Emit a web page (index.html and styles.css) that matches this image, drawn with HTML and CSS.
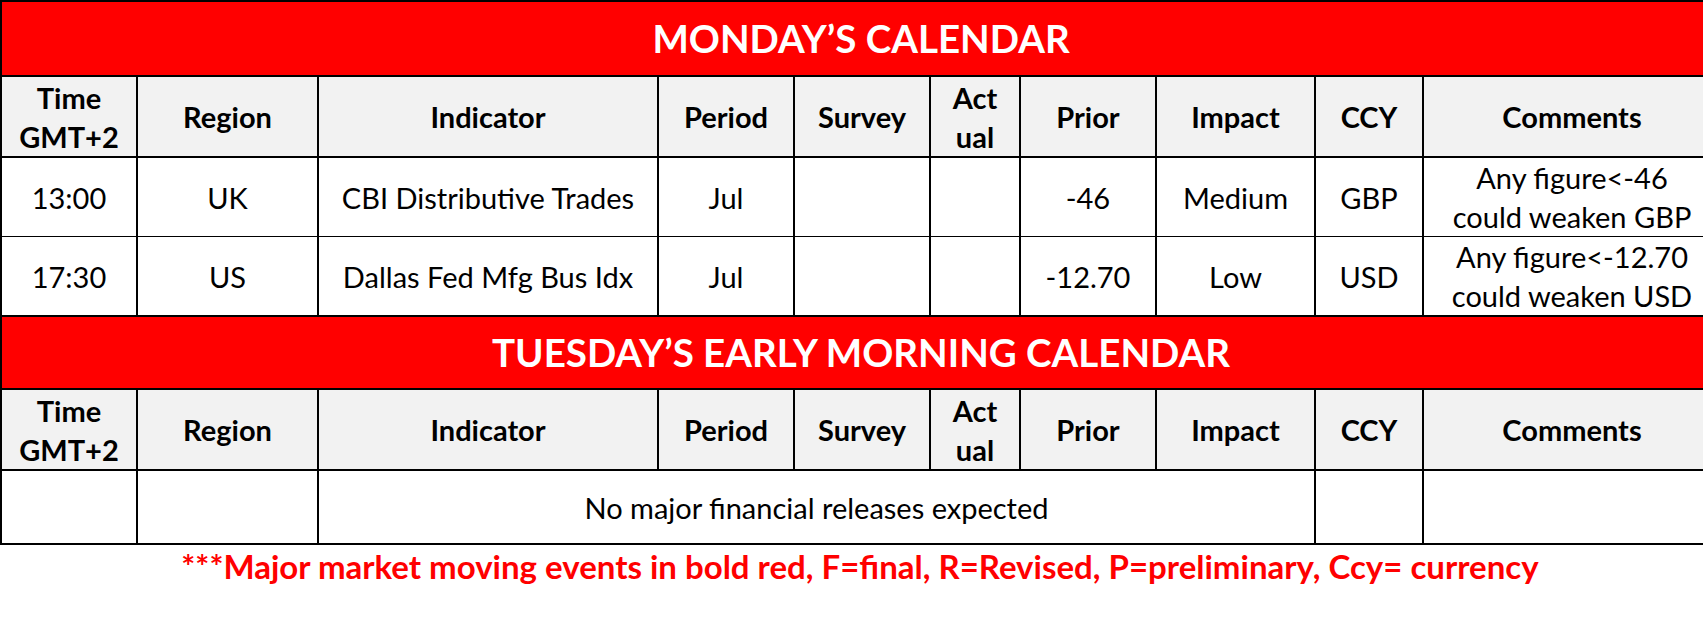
FILE: index.html
```html
<!DOCTYPE html>
<html lang="en">
<head>
<meta charset="utf-8">
<title>Calendar</title>
<link rel="stylesheet" href="styles.css">
</head>
<body>
<div class="page">
<table class="cal">
  <colgroup>
    <col class="c-time"><col class="c-region"><col class="c-ind"><col class="c-period"><col class="c-survey"><col class="c-actual"><col class="c-prior"><col class="c-impact"><col class="c-ccy"><col class="c-comm">
  </colgroup>
  <tbody>
    <tr class="title"><th colspan="10">MONDAY’S CALENDAR</th></tr>
    <tr class="head">
      <th>Time<br>GMT+2</th><th>Region</th><th>Indicator</th><th>Period</th><th>Survey</th><th>Act<br>ual</th><th>Prior</th><th>Impact</th><th>CCY</th><th>Comments</th>
    </tr>
    <tr class="row r1">
      <td>13:00</td><td>UK</td><td>CBI Distributive Trades</td><td>Jul</td><td></td><td></td><td>-46</td><td>Medium</td><td>GBP</td><td>Any figure&lt;-46<br>could weaken GBP</td>
    </tr>
    <tr class="row r2">
      <td>17:30</td><td>US</td><td>Dallas Fed Mfg Bus Idx</td><td>Jul</td><td></td><td></td><td>-12.70</td><td>Low</td><td>USD</td><td>Any figure&lt;-12.70<br>could weaken USD</td>
    </tr>
    <tr class="title t2"><th colspan="10">TUESDAY’S EARLY MORNING CALENDAR</th></tr>
    <tr class="head">
      <th>Time<br>GMT+2</th><th>Region</th><th>Indicator</th><th>Period</th><th>Survey</th><th>Act<br>ual</th><th>Prior</th><th>Impact</th><th>CCY</th><th>Comments</th>
    </tr>
    <tr class="row r3">
      <td></td><td></td><td colspan="6">No major financial releases expected</td><td></td><td></td>
    </tr>
  </tbody>
</table>
<p class="note">***Major market moving events in bold red, F=final, R=Revised, P=preliminary, Ccy= currency</p>
</div>
</body>
</html>
```

FILE: styles.css
```css
html, body {
  margin: 0;
  padding: 0;
  background: #ffffff;
  overflow: hidden;
}

body {
  font-family: Lato, "Noto Sans", sans-serif;
  color: #000000;
}

.page {
  width: 1720px;
}

.cal {
  border-collapse: collapse;
  table-layout: fixed;
  width: 1720px;
}

.c-time { width: 136px; }
.c-region { width: 181px; }
.c-ind { width: 340px; }
.c-period { width: 136px; }
.c-survey { width: 136px; }
.c-actual { width: 90px; }
.c-prior { width: 136px; }
.c-impact { width: 159px; }
.c-ccy { width: 108px; }
.c-comm { width: 298px; }

.cal th,
.cal td {
  border: 2px solid #000000;
  padding: 0;
  text-align: center;
  vertical-align: middle;
  font-size: 29px;
  line-height: 39px;
}

.title th {
  background: #ff0000;
  color: #ffffff;
  font-size: 38.5px;
  font-weight: 700;
  height: 73px;
}

.head th {
  background: #f2f2f2;
  font-weight: 700;
  height: 79px;
}

.row td {
  font-weight: 400;
}

.r1 td {
  height: 76px;
  border-bottom-width: 1px;
}

.r2 td {
  height: 77px;
  border-top-width: 1px;
}

.t2 th {
  height: 71px;
}

.r3 td {
  height: 72px;
}

.note {
  margin: 2px 0 0;
  text-align: center;
  color: #ff0000;
  font-weight: 700;
  font-size: 33px;
  line-height: 39px;
}
```
